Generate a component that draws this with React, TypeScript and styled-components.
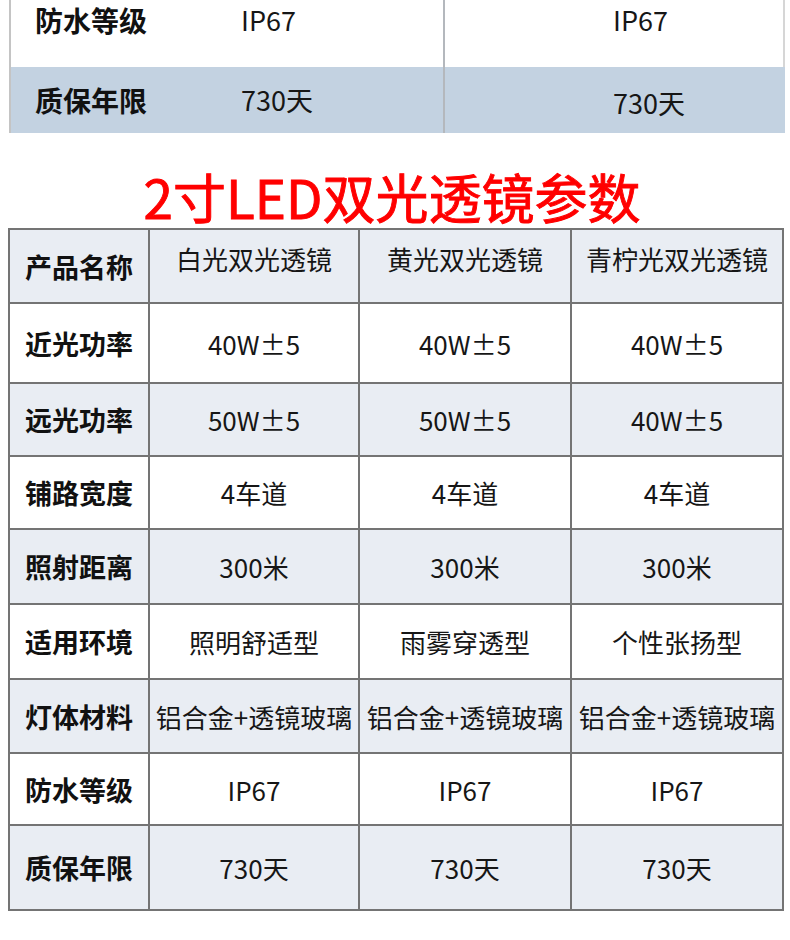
import React from 'react';
import styled, { createGlobalStyle } from 'styled-components';

const GlobalStyle = createGlobalStyle`
  html, body {
    margin: 0;
    padding: 0;
    background: #ffffff;
  }
  body {
    font-family: "Noto Sans CJK SC", "Noto Sans", sans-serif;
    color: #161616;
  }
`;

const Page = styled.div`
  width: 790px;
  height: 940px;
  overflow: hidden;
  background: #ffffff;
`;

// 上一段表格的末尾（被截断的部分）
const PrevTable = styled.div`
  margin-left: 9px;
  width: 774px;
  border-left: 2px solid #c4c4c4;
`;

const PrevRow = styled.div<{ $blue?: boolean; $h: number }>`
  display: grid;
  grid-template-columns: 434px 338px;
  height: ${(p) => p.$h}px;
  background: ${(p) => (p.$blue ? '#c3d2e1' : '#ffffff')};
  border-right: 2px solid ${(p) => (p.$blue ? '#c3d2e1' : '#d6d6d6')};
`;

const PrevMain = styled.div<{ $top?: boolean }>`
  display: grid;
  grid-template-columns: 206px auto;
  align-items: ${(p) => (p.$top ? 'start' : 'center')};
  padding-left: 24px;
  padding-top: ${(p) => (p.$top ? 5 : 0)}px;
  border-right: 2px solid #b4b8bd;
`;

const PrevSide = styled.div<{ $top?: boolean; $shift?: number }>`
  display: flex;
  align-items: ${(p) => (p.$top ? 'flex-start' : 'center')};
  padding-left: 168px;
  padding-top: ${(p) => p.$shift ?? 0}px;
`;

const PrevLabel = styled.div`
  font-size: 28px;
  font-weight: 700;
  line-height: 30px;
  color: #111;
`;

const PrevValue = styled.div`
  font-size: 27px;
  line-height: 30px;
  color: #161616;
`;

const TitleBar = styled.div`
  padding: 36px 6px 5px 0;
  text-align: center;
`;

const Title = styled.h1`
  margin: 0;
  font-size: 53px;
  line-height: 54px;
  font-weight: 400;
  color: #ff0000;
  -webkit-text-stroke: 0.9px #ff0000;
`;

const Table = styled.div`
  margin-left: 8px;
  width: 776px;
  border-left: 2px solid #747474;
  border-top: 2px solid #747474;
  box-sizing: border-box;
`;

const Row = styled.div<{ $h: number; $shade?: boolean }>`
  display: grid;
  grid-template-columns: 140px 210px 212px 212px;
  height: ${(p) => p.$h}px;
  box-sizing: border-box;
  border-bottom: 2px solid #747474;
  background: ${(p) => (p.$shade ? '#e9edf3' : '#ffffff')};
`;

const Cell = styled.div<{ $lift?: number }>`
  display: flex;
  align-items: center;
  justify-content: center;
  box-sizing: border-box;
  border-right: 2px solid #747474;
  padding-bottom: ${(p) => p.$lift ?? 0}px;
  white-space: nowrap;
`;

const Label = styled.span`
  font-size: 27px;
  font-weight: 700;
  color: #111;
`;

const Value = styled.span`
  font-size: 26px;
  font-weight: 400;
  color: #161616;
`;

interface SpecRow {
    label: string;
    values: string[];
    height: number;
}

const header: SpecRow = {
    label: '产品名称',
    values: ['白光双光透镜', '黄光双光透镜', '青柠光双光透镜'],
    height: 74,
};

const specs: SpecRow[] = [
    { label: '近光功率', values: ['40W±5', '40W±5', '40W±5'], height: 80 },
    { label: '远光功率', values: ['50W±5', '50W±5', '40W±5'], height: 73 },
    { label: '铺路宽度', values: ['4车道', '4车道', '4车道'], height: 73 },
    { label: '照射距离', values: ['300米', '300米', '300米'], height: 75 },
    { label: '适用环境', values: ['照明舒适型', '雨雾穿透型', '个性张扬型'], height: 75 },
    { label: '灯体材料', values: ['铝合金+透镜玻璃', '铝合金+透镜玻璃', '铝合金+透镜玻璃'], height: 74 },
    { label: '防水等级', values: ['IP67', 'IP67', 'IP67'], height: 72 },
    { label: '质保年限', values: ['730天', '730天', '730天'], height: 85 },
];

const App: React.FC = () => {
    return (
        <Page>
            <GlobalStyle />

            <PrevTable>
                <PrevRow $h={67}>
                    <PrevMain $top>
                        <PrevLabel>防水等级</PrevLabel>
                        <PrevValue>IP67</PrevValue>
                    </PrevMain>
                    <PrevSide $top $shift={5}>
                        <PrevValue>IP67</PrevValue>
                    </PrevSide>
                </PrevRow>
                <PrevRow $h={66} $blue>
                    <PrevMain>
                        <PrevLabel>质保年限</PrevLabel>
                        <PrevValue>730天</PrevValue>
                    </PrevMain>
                    <PrevSide $shift={6}>
                        <PrevValue>730天</PrevValue>
                    </PrevSide>
                </PrevRow>
            </PrevTable>

            <TitleBar>
                <Title>2寸LED双光透镜参数</Title>
            </TitleBar>

            <Table>
                <Row $h={header.height} $shade>
                    <Cell>
                        <Label>{header.label}</Label>
                    </Cell>
                    {header.values.map((v, i) => (
                        <Cell key={i} $lift={16}>
                            <Value>{v}</Value>
                        </Cell>
                    ))}
                </Row>
                {specs.map((row, idx) => (
                    <Row key={row.label} $h={row.height} $shade={idx % 2 === 1}>
                        <Cell>
                            <Label>{row.label}</Label>
                        </Cell>
                        {row.values.map((v, i) => (
                            <Cell key={i}>
                                <Value>{v}</Value>
                            </Cell>
                        ))}
                    </Row>
                ))}
            </Table>
        </Page>
    );
};

export default App;
